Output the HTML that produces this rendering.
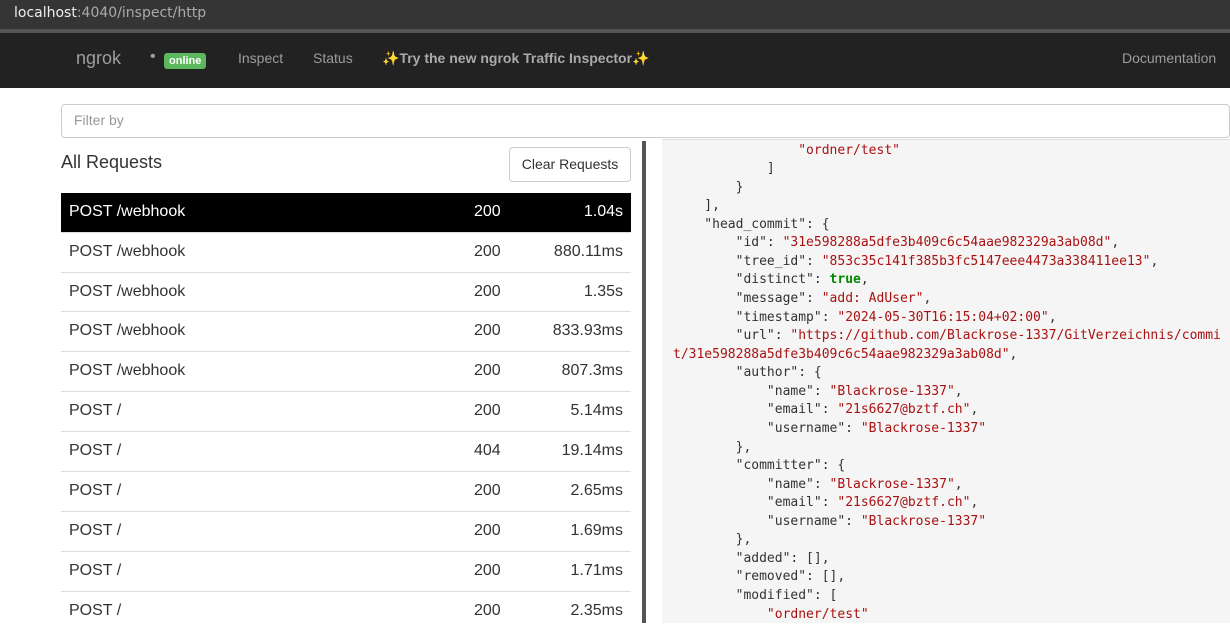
<!DOCTYPE html>
<html><head><meta charset="utf-8"><style>
*{box-sizing:border-box;margin:0;padding:0}
body{width:1230px;height:623px;overflow:hidden;background:#fff;font-family:"Liberation Sans",sans-serif;position:relative}
.abs{position:absolute}
#bar{left:0;top:0;width:1230px;height:29px;background:#353535}
#bar span{position:absolute;left:14px;top:5px;font-family:"DejaVu Sans",sans-serif;font-size:14px;color:#aaa}
#bar b{font-weight:normal;color:#eee}
#sep{left:0;top:29px;width:1230px;height:4px;background:#555}
#nav{left:0;top:33px;width:1230px;height:55px;background:#222;color:#9d9d9d;font-size:14px}
#nav div{position:absolute;top:17px}
#filter{left:61px;top:104px;width:1169px;height:34px;border:1px solid #ccc;border-radius:4px;padding:7px 12px;color:#999;font-size:14px}
#right{left:662px;top:139px;width:568px;height:484px;background:#f5f5f5}
#vline{left:642px;top:141px;width:4px;height:482px;background:#555}
pre{position:absolute;left:673px;top:141.5px;font-family:"DejaVu Sans Mono",monospace;font-size:13px;line-height:18.56px;color:#333}
.s{color:#a11}.t{color:#080;font-weight:bold}
.row{position:absolute;left:61px;width:570px;height:40px;border-top:1px solid #ddd;font-size:16px;color:#333}
.row span{position:absolute;top:10px}
.row.sel{background:#000;color:#fff;border-top:none}
</style></head><body>
<div id="bar" class="abs"><span><b>localhost</b>:4040/inspect/http</span></div>
<div id="sep" class="abs"></div>
<div id="nav" class="abs">
<div style="left:76px;top:15px;font-size:18px;color:#9d9d9d">ngrok</div>
<div style="left:150px;top:15px;font-size:16px">•</div>
<div style="left:164px;top:20px;background:#5cb85c;color:#fff;font-size:11px;font-weight:bold;padding:2px 5px;border-radius:3px">online</div>
<div style="left:238px">Inspect</div>
<div style="left:313px">Status</div>
<div style="left:382px;font-weight:bold;color:#aaa">✨Try the new ngrok Traffic Inspector✨</div>
<div style="left:1122px">Documentation</div>
</div>
<div id="filter" class="abs">Filter by</div>
<div class="abs" style="left:61px;top:152px;font-size:18px;color:#333">All Requests</div>
<div class="abs" style="left:509px;top:147px;width:122px;height:35px;border:1px solid #ccc;border-radius:4px;font-size:14px;color:#333;text-align:center;line-height:33px">Clear Requests</div>
<div class="row sel" style="top:193px"><span style="left:8px">POST /webhook</span><span style="left:413px">200</span><span style="right:8px">1.04s</span></div>
<div class="row" style="top:232px"><span style="left:8px">POST /webhook</span><span style="left:413px">200</span><span style="right:8px">880.11ms</span></div>
<div class="row" style="top:272px"><span style="left:8px">POST /webhook</span><span style="left:413px">200</span><span style="right:8px">1.35s</span></div>
<div class="row" style="top:311px"><span style="left:8px">POST /webhook</span><span style="left:413px">200</span><span style="right:8px">833.93ms</span></div>
<div class="row" style="top:351px"><span style="left:8px">POST /webhook</span><span style="left:413px">200</span><span style="right:8px">807.3ms</span></div>
<div class="row" style="top:391px"><span style="left:8px">POST /</span><span style="left:413px">200</span><span style="right:8px">5.14ms</span></div>
<div class="row" style="top:431px"><span style="left:8px">POST /</span><span style="left:413px">404</span><span style="right:8px">19.14ms</span></div>
<div class="row" style="top:471px"><span style="left:8px">POST /</span><span style="left:413px">200</span><span style="right:8px">2.65ms</span></div>
<div class="row" style="top:511px"><span style="left:8px">POST /</span><span style="left:413px">200</span><span style="right:8px">1.69ms</span></div>
<div class="row" style="top:551px"><span style="left:8px">POST /</span><span style="left:413px">200</span><span style="right:8px">1.71ms</span></div>
<div class="row" style="top:591px"><span style="left:8px">POST /</span><span style="left:413px">200</span><span style="right:8px">2.35ms</span></div>
<div id="right" class="abs"></div>
<div class="abs" style="left:662px;top:139px;width:568px;height:1px;background:#ddd"></div>
<div id="vline" class="abs"></div>
<pre>                <span class="s">"ordner/test"</span>
            ]
        }
    ],
    "head_commit": {
        "id": <span class="s">"31e598288a5dfe3b409c6c54aae982329a3ab08d"</span>,
        "tree_id": <span class="s">"853c35c141f385b3fc5147eee4473a338411ee13"</span>,
        "distinct": <span class="t">true</span>,
        "message": <span class="s">"add: AdUser"</span>,
        "timestamp": <span class="s">"2024-05-30T16:15:04+02:00"</span>,
        "url": <span class="s">"https://github.com/Blackrose-1337/GitVerzeichnis/commi
t/31e598288a5dfe3b409c6c54aae982329a3ab08d"</span>,
        "author": {
            "name": <span class="s">"Blackrose-1337"</span>,
            "email": <span class="s">"21s6627@bztf.ch"</span>,
            "username": <span class="s">"Blackrose-1337"</span>
        },
        "committer": {
            "name": <span class="s">"Blackrose-1337"</span>,
            "email": <span class="s">"21s6627@bztf.ch"</span>,
            "username": <span class="s">"Blackrose-1337"</span>
        },
        "added": [],
        "removed": [],
        "modified": [
            <span class="s">"ordner/test"</span>
</pre>
</body></html>
